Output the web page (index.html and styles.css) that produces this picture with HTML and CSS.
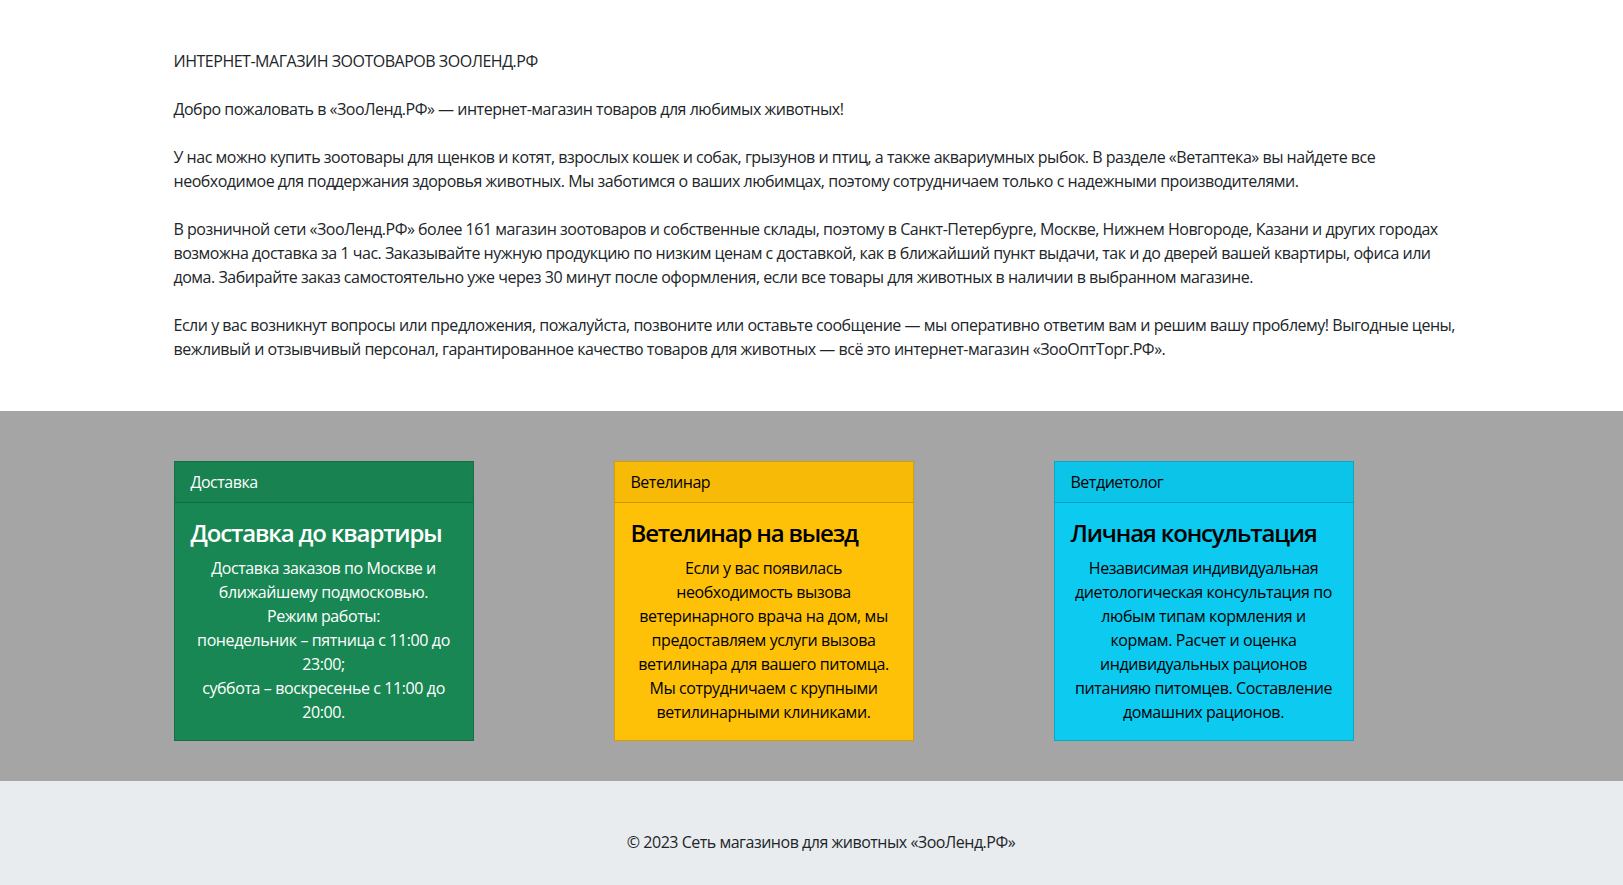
FILE: index.html
```html
<!DOCTYPE html>
<html lang="ru">
<head>
<meta charset="utf-8">
<title>ЗооЛенд.РФ</title>
<link rel="stylesheet" href="styles.css">
</head>
<body>
<main class="intro">
  <div class="container">
    <p>ИНТЕРНЕТ-МАГАЗИН ЗООТОВАРОВ ЗООЛЕНД.РФ</p>
    <p>Добро пожаловать в «ЗооЛенд.РФ» — интернет-магазин товаров для любимых животных!</p>
    <p>У нас можно купить зоотовары для щенков и котят, взрослых кошек и собак, грызунов и птиц, а также аквариумных рыбок. В разделе «Ветаптека» вы найдете все необходимое для поддержания здоровья животных. Мы заботимся о ваших любимцах, поэтому сотрудничаем только с надежными производителями.</p>
    <p>В розничной сети «ЗооЛенд.РФ» более 161 магазин зоотоваров и собственные склады, поэтому в Санкт-Петербурге, Москве, Нижнем Новгороде, Казани и других городах возможна доставка за 1 час. Заказывайте нужную продукцию по низким ценам с доставкой, как в ближайший пункт выдачи, так и до дверей вашей квартиры, офиса или дома. Забирайте заказ самостоятельно уже через 30 минут после оформления, если все товары для животных в наличии в выбранном магазине.</p>
    <p>Если у вас возникнут вопросы или предложения, пожалуйста, позвоните или оставьте сообщение — мы оперативно ответим вам и решим вашу проблему! Выгодные цены, вежливый и отзывчивый персонал, гарантированное качество товаров для животных — всё это интернет-магазин «ЗооОптТорг.РФ».</p>
  </div>
</main>
<section class="services">
  <div class="container cards">
    <div class="col">
      <div class="card card-success">
        <div class="card-header">Доставка</div>
        <div class="card-body">
          <h4 class="card-title">Доставка до квартиры</h4>
          <p class="card-text">Доставка заказов по Москве и ближайшему подмосковью.<br>Режим работы:<br>понедельник – пятница с 11:00 до 23:00;<br>суббота – воскресенье с 11:00 до 20:00.</p>
        </div>
      </div>
    </div>
    <div class="col">
      <div class="card card-warning">
        <div class="card-header">Ветелинар</div>
        <div class="card-body">
          <h4 class="card-title">Ветелинар на выезд</h4>
          <p class="card-text">Если у вас появилась необходимость вызова ветеринарного врача на дом, мы предоставляем услуги вызова ветилинара для вашего питомца. Мы сотрудничаем с крупными ветилинарными клиниками.</p>
        </div>
      </div>
    </div>
    <div class="col">
      <div class="card card-info">
        <div class="card-header">Ветдиетолог</div>
        <div class="card-body">
          <h4 class="card-title">Личная консультация</h4>
          <p class="card-text">Независимая индивидуальная диетологическая консультация по любым типам кормления и кормам. Расчет и оценка индивидуальных рационов питанияю питомцев. Составление домашних рационов.</p>
        </div>
      </div>
    </div>
  </div>
</section>
<footer class="footer">
  <p>© 2023 Сеть магазинов для животных «ЗооЛенд.РФ»</p>
</footer>
</body>
</html>
```
FILE: styles.css
```css
* { box-sizing: border-box; }
html, body { margin: 0; padding: 0; }
body {
  font-family: "Open Sans", "Noto Sans", sans-serif;
  font-size: 16px;
  line-height: 24px;
  letter-spacing: -0.48px;
  color: #212529;
  background: #fff;
}
.container {
  width: 1320px;
  margin: 0 auto;
  padding: 0 12px 0 22px;
}
.intro { padding: 49px 0 26px; }
.intro p { margin: 0 0 24px; }
.services {
  background: #a5a5a5;
  padding: 50px 0 40px;
}
.cards {
  display: grid;
  grid-template-columns: repeat(3, 440px);
  padding: 0 0 0 10px;
}
.col { padding: 0 12px; }
.card {
  width: 300px;
  border: 1px solid rgba(0, 0, 0, 0.175);
}
.card-header {
  padding: 8px 16px;
  background: rgba(0, 0, 0, 0.03);
  border-bottom: 1px solid rgba(0, 0, 0, 0.175);
}
.card-body { padding: 16px; }
.card-title {
  margin: 0 0 8px;
  font-size: 24px;
  font-weight: 600;
  line-height: 28.8px;
  letter-spacing: -1.15px;
}
.card-text { margin: 0; text-align: center; letter-spacing: -0.4px; }
.card-success { background: #198754; color: #fff; }
.card-warning { background: #ffc107; color: #000; }
.card-info { background: #0dcaf0; color: #000; }
.footer {
  background: #e9ecef;
  padding: 49px 0 48px 19px;
  text-align: center;
}
.footer p { margin: 0; }
```
